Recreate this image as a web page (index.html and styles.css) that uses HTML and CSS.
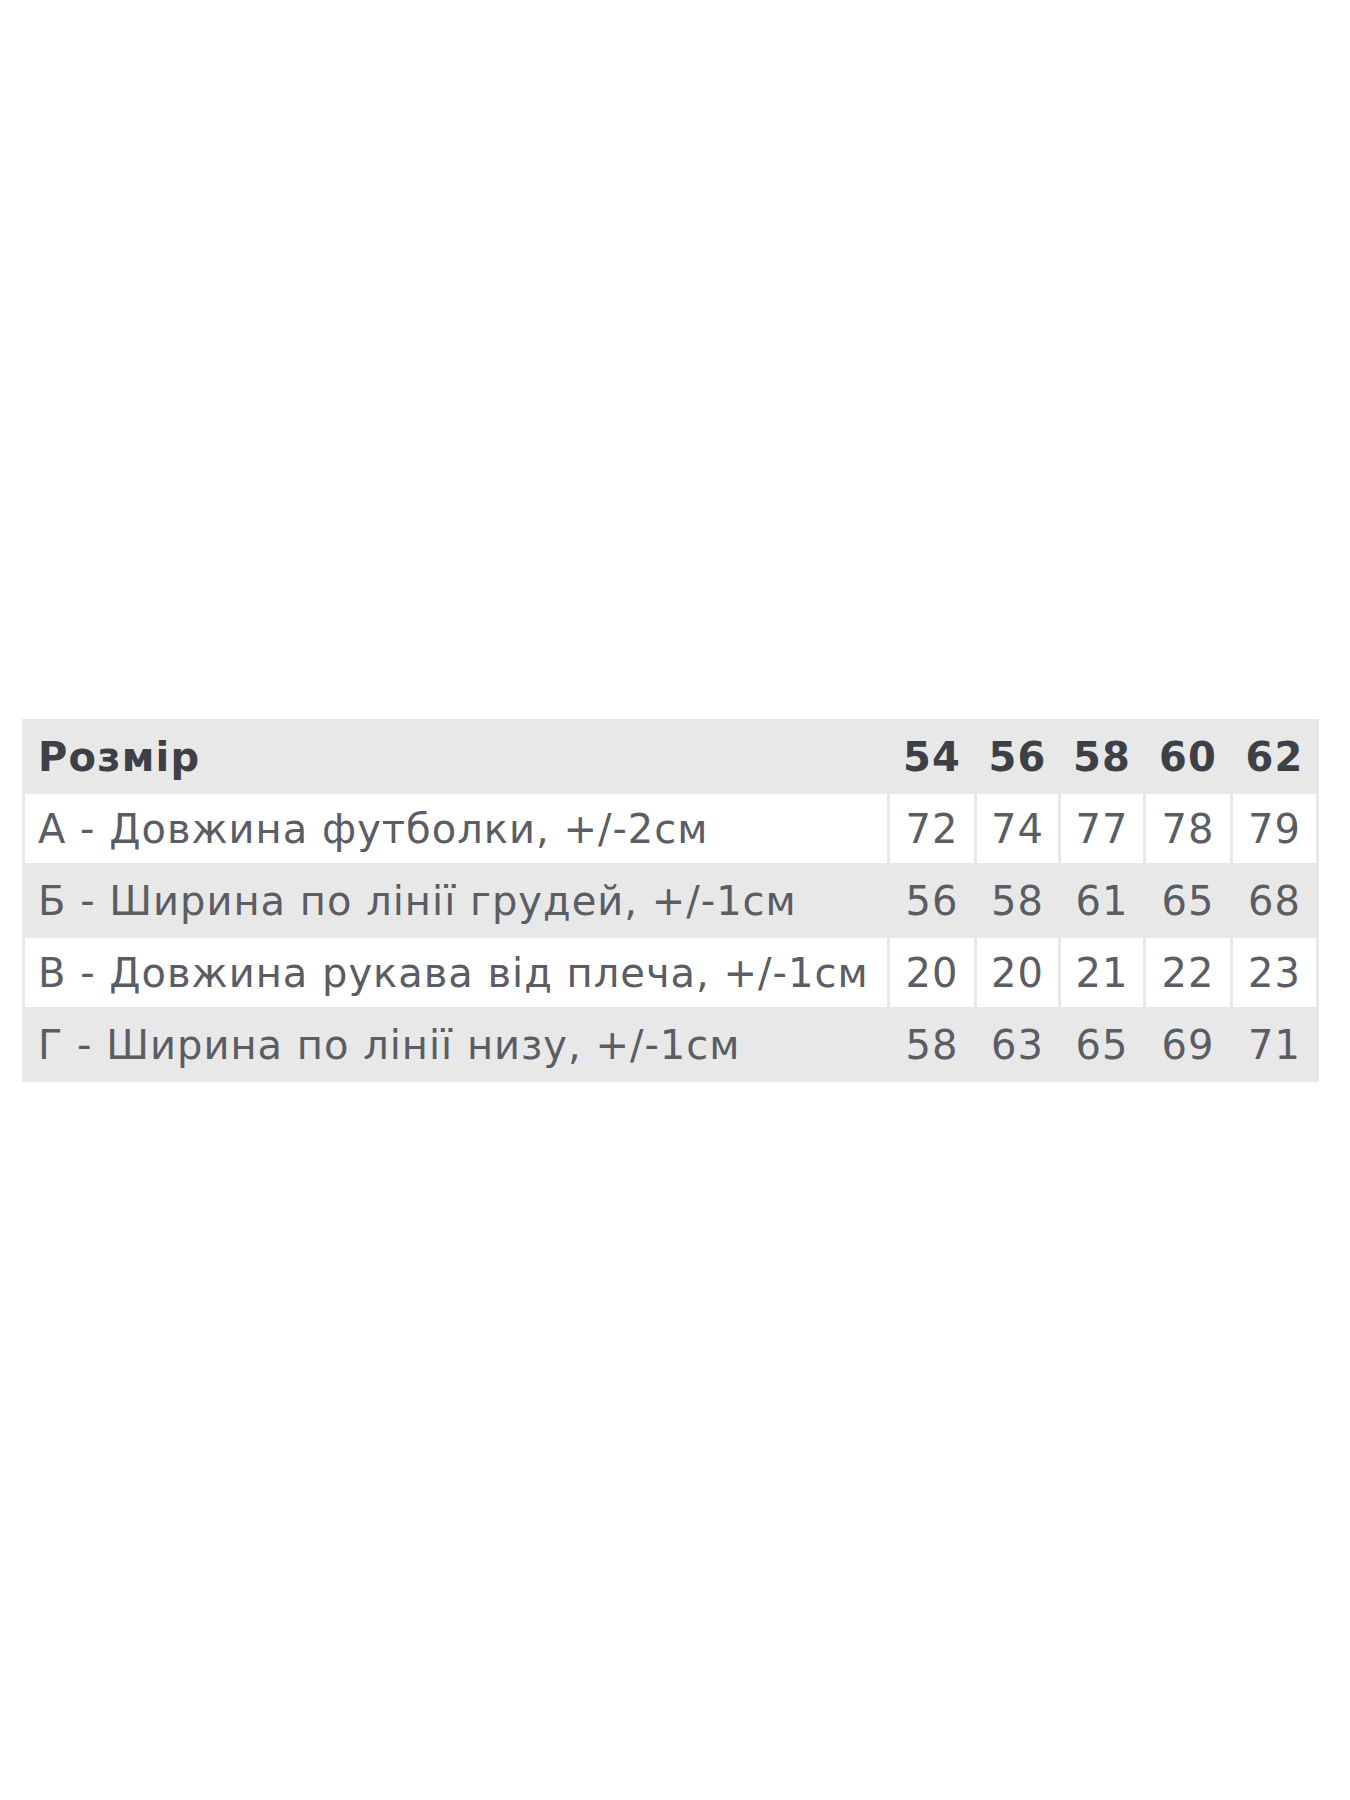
FILE: index.html
```html
<!DOCTYPE html>
<html lang="uk">
<head>
<meta charset="utf-8">
<title>Розмірна сітка</title>
<link rel="stylesheet" href="styles.css">
</head>
<body>
<main class="page">
  <table class="sizes">
    <colgroup>
      <col class="col-label">
      <col class="col-n1">
      <col class="col-n2">
      <col class="col-n3">
      <col class="col-n4">
      <col class="col-n5">
    </colgroup>
    <thead>
      <tr class="head">
        <th class="label">Розмір</th>
        <th>54</th><th>56</th><th>58</th><th>60</th><th>62</th>
      </tr>
    </thead>
    <tbody>
      <tr class="light">
        <td class="label">А - Довжина футболки, +/-2см</td>
        <td>72</td><td>74</td><td>77</td><td>78</td><td>79</td>
      </tr>
      <tr class="dark">
        <td class="label">Б - Ширина по лінії грудей, +/-1см</td>
        <td>56</td><td>58</td><td>61</td><td>65</td><td>68</td>
      </tr>
      <tr class="light">
        <td class="label">В - Довжина рукава від плеча, +/-1см</td>
        <td>20</td><td>20</td><td>21</td><td>22</td><td>23</td>
      </tr>
      <tr class="dark">
        <td class="label">Г - Ширина по лінії низу, +/-1см</td>
        <td>58</td><td>63</td><td>65</td><td>69</td><td>71</td>
      </tr>
    </tbody>
  </table>
</main>
</body>
</html>
```

FILE: styles.css
```css
html, body {
  margin: 0;
  padding: 0;
  background: #ffffff;
}

.page {
  padding: 719px 0 0 22px;
  height: 1800px;
  box-sizing: border-box;
}

.sizes {
  width: 1297px;
  table-layout: fixed;
  border-collapse: separate;
  border-spacing: 3px;
  background: #e8e8e8;
  font-family: "DejaVu Sans", sans-serif;
  font-size: 40px;
  letter-spacing: 1px;
  color: #5a5d64;
}

.col-label { width: 862px; }
.col-n1 { width: 84px; }
.col-n2 { width: 81px; }
.col-n3 { width: 82px; }
.col-n4 { width: 84px; }
.col-n5 { width: 83px; }

.sizes th,
.sizes td {
  height: 69px;
  padding: 0;
  text-align: center;
  vertical-align: middle;
  white-space: nowrap;
}

.sizes .label {
  text-align: left;
  padding-left: 13px;
}

.head th {
  font-weight: bold;
  color: #3d4046;
  letter-spacing: 1.2px;
}

.light td {
  background: #ffffff;
}

.dark td {
  background: #e8e8e8;
}
```
